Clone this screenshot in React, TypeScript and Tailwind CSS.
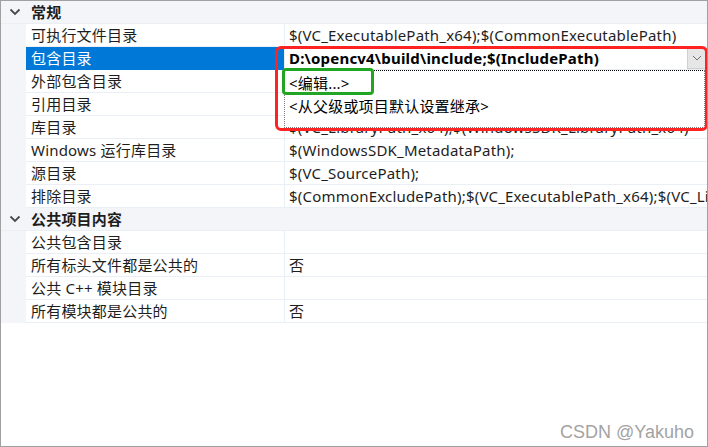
import React from "react";

type Row =
  | { kind: "header"; label: string }
  | { kind: "item"; label: string; value: string; selected?: boolean };

const rows: Row[] = [
  { kind: "header", label: "常规" },
  { kind: "item", label: "可执行文件目录", value: "$(VC_ExecutablePath_x64);$(CommonExecutablePath)" },
  { kind: "item", label: "包含目录", value: "", selected: true },
  { kind: "item", label: "外部包含目录", value: "" },
  { kind: "item", label: "引用目录", value: "" },
  { kind: "item", label: "库目录", value: "$(VC_LibraryPath_x64);$(WindowsSDK_LibraryPath_x64)" },
  { kind: "item", label: "Windows 运行库目录", value: "$(WindowsSDK_MetadataPath);" },
  { kind: "item", label: "源目录", value: "$(VC_SourcePath);" },
  { kind: "item", label: "排除目录", value: "$(CommonExcludePath);$(VC_ExecutablePath_x64);$(VC_LibraryPath_x64)" },
  { kind: "header", label: "公共项目内容" },
  { kind: "item", label: "公共包含目录", value: "" },
  { kind: "item", label: "所有标头文件都是公共的", value: "否" },
  { kind: "item", label: "公共 C++ 模块目录", value: "" },
  { kind: "item", label: "所有模块都是公共的", value: "否" },
];

const font = { fontFamily: '"Noto Sans", "Noto Sans CJK SC", sans-serif' };

function Chevron() {
  return (
    <svg width="12" height="8" viewBox="0 0 12 8" className="block">
      <path d="M1.5 1.5 L6 6 L10.5 1.5" fill="none" stroke="#4a4a4a" strokeWidth="1.8" />
    </svg>
  );
}

export default function App() {
  return (
    <div
      className="relative w-[708px] h-[447px] overflow-hidden border border-[#a0a0a0] bg-white text-[15px] leading-none tracking-[0.2px] text-[#1e1e1e]"
      style={font}
    >
      <div className="flex flex-col">
        {rows.map((r, i) =>
          r.kind === "header" ? (
            <div key={i} className="flex h-[23px] items-center bg-[#f3f5f9] border-b border-[#eaeef5]">
              <div className="flex w-[25px] justify-center pl-[2px]">
                <Chevron />
              </div>
              <div className="pl-[5px] font-bold">{r.label}</div>
            </div>
          ) : (
            <div key={i} className="flex h-[23px]">
              <div className="w-[25px] bg-[#f3f5f9]" />
              <div
                className={
                  "flex w-[258px] items-center whitespace-nowrap pl-[5px] border-b " +
                  (r.selected ? "bg-[#0078d7] text-white border-[#0078d7]" : "border-[#eaeef5]")
                }
              >
                {r.label}
              </div>
              <div className="w-px bg-[#eaeef5]" />
              <div className="flex flex-1 items-center overflow-hidden whitespace-nowrap pl-[4px] border-b border-[#eaeef5]">
                {r.selected ? (
                  <div className="flex h-full w-full items-center">
                    <span className="flex-1 font-bold text-black">D:\opencv4\build\include;$(IncludePath)</span>
                    <div className="mr-[1px] flex h-[21px] w-[19px] items-center justify-center border border-[#cfcfcf] bg-[#e6e6e6]">
                      <svg width="10" height="6" viewBox="0 0 10 6">
                        <path d="M1 1 L5 5 L9 1" fill="none" stroke="#707070" strokeWidth="1" />
                      </svg>
                    </div>
                  </div>
                ) : (
                  r.value
                )}
              </div>
            </div>
          )
        )}
      </div>

      {/* dropdown list */}
      <div className="absolute left-[283px] top-[69px] w-[421px] h-[58px] bg-white border-x border-b border-[#7a7a7a] border-t border-t-black border-dotted text-black">
        <div className="flex h-[24px] items-center pl-[4px]">&lt;编辑...&gt;</div>
        <div className="flex h-[22px] items-center pl-[4px]">&lt;从父级或项目默认设置继承&gt;</div>
      </div>

      {/* annotations */}
      <div className="absolute left-[274px] top-[45px] w-[433px] h-[85px] rounded-[6px] border-[3px] border-[#ff2222]" />
      <div className="absolute left-[281px] top-[67px] w-[92px] h-[27px] rounded-[4px] border-[3px] border-[#22a522]" />

      <div
        className="absolute right-[13px] bottom-[5px] text-[18px] tracking-normal text-[#a3a3a3]"
        style={{ fontFamily: '"Liberation Sans", Arial, sans-serif' }}
      >
        CSDN @Yakuho
      </div>
    </div>
  );
}
